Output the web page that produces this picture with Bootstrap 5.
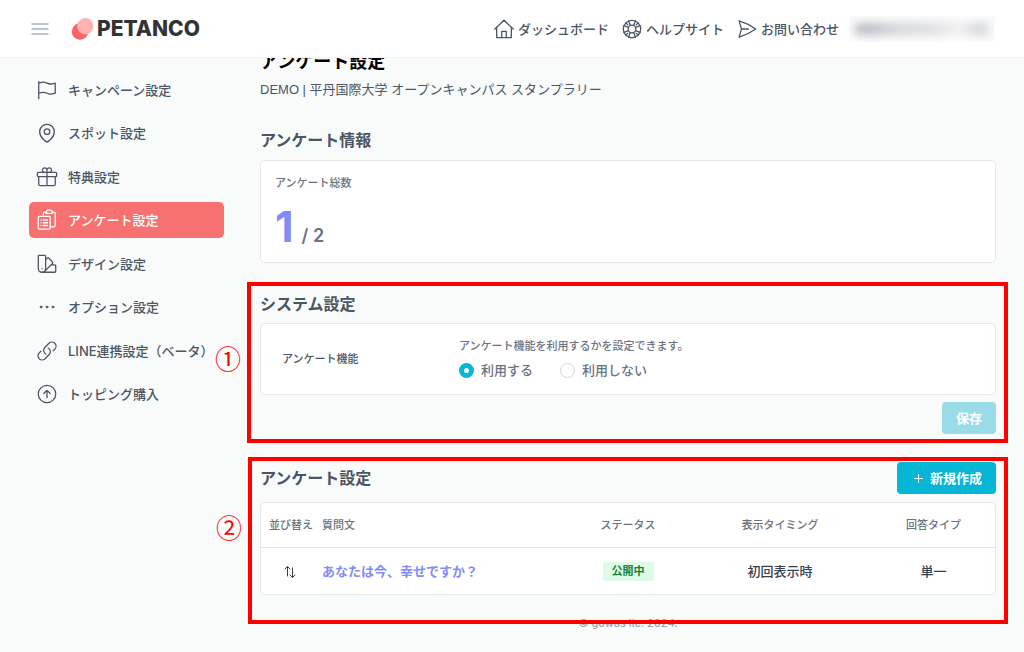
<!DOCTYPE html>
<html lang="ja">
<head>
<meta charset="utf-8">
<meta name="viewport" content="width=device-width, initial-scale=1">
<title>アンケート設定 | PETANCO</title>
<link href="https://cdn.jsdelivr.net/npm/bootstrap@5.3.0/dist/css/bootstrap.min.css" rel="stylesheet">
<style>
  :root { --ink: #4b5563; --muted-ink: #6b7280; --line: #e5e7eb; --cyan: #06b6d4; --note: #ff0000; }
  body { font-family: "Inter", "Noto Sans CJK JP", sans-serif; font-size: 13px; line-height: 20px; font-weight: 500; color: var(--ink); background: #f9fbfb; }
  svg { fill: none; stroke: currentColor; stroke-linecap: round; stroke-linejoin: round; flex: none; }
  .ico { width: 22px; height: 22px; stroke-width: 1.4; }
  .topbar { height: 58px; padding: 0 29px; background: #fff; border-bottom: 1px solid #f0f2f3; }
  .menu-btn { color: #a9b4c4; margin-right: 20px; line-height: 0; }
  .brand { color: #333; font-size: 21px; font-weight: 800; gap: 2px; }
  .topnav { gap: 12px; }
  .topnav a { color: var(--ink); gap: 3px; }
  .account { width: 146px; height: 26px; margin-left: -2px; background: #fcfcfc; overflow: hidden; padding: 7px 6px; }
  .account-name { height: 12px; filter: blur(5px); background: linear-gradient(90deg, #b9bdc4 0 14%, #d0d3d8 30%, #dcdee2 60%, #eff0f2 78%, #d3d6da 90%); }
  .shell { padding: 48px 28px 0 29px; gap: 36px; }
  .sidebar { width: 195px; margin-top: 24px; flex: none; }
  .side-list { height: 340px; }
  .side-list a { height: 36px; padding: 0 7px; gap: 10px; color: var(--ink); border-radius: 5px; }
  .side-list a.active { background: #f87171; color: #fff; }
  .page-title { font-size: 18px; line-height: 28px; font-weight: 700; color: #000; margin-bottom: 4px; }
  .campaign { font-family: "Liberation Sans", "Noto Sans CJK JP", sans-serif; font-weight: 400; }
  .sec-title { font-size: 16px; line-height: 24px; font-weight: 700; color: var(--ink); margin: 0; }
  .panel { background: #fff; border: 1px solid var(--line); border-radius: 5px; }
  .fine { font-size: 11px; line-height: 16px; color: var(--muted-ink); }
  .figures { margin-top: 11px; }
  .count { font-size: 43px; line-height: 48px; font-weight: 700; color: #818cf8; }
  .total { font-size: 18px; font-weight: 600; color: var(--muted-ink); }
  .stats { padding: 14px; height: 103px; margin-top: 8px; }
  .info { padding-top: 28px; margin-bottom: 29px; }
  .noted { position: relative; }
  .frame { position: absolute; border: 4px solid var(--note); pointer-events: none; inset: -10px -12px -9px -13px; }
  .frame-list { inset: -1px -12px -29px -12px; }
  .frame-no { position: absolute; right: 100%; top: 50%; transform: translateY(-50%); margin: -5px 10px 0 0; font: 400 26px/32px "Noto Sans CJK JP", sans-serif; color: var(--note); }
  .frame-list .frame-no { margin-top: -14px; }
  .setting { height: 72px; padding: 0 21px; margin: 7px 0; }
  .setting-name { width: 177px; flex: none; color: var(--ink); }
  .choices { gap: 27px; margin-top: 6px; }
  .choice { gap: 7px; color: var(--muted-ink); }
  .choice .form-check-input { width: 15px; height: 15px; margin: 0; border-color: #d1d5db; }
  .choice .form-check-input:checked { background: #fff; border: 5px solid var(--cyan); }
  .act { height: 32px; border: 0; border-radius: 4px; padding: 0 14px; font-size: 13px; line-height: 20px; font-weight: 700; color: #fff; background: var(--cyan); }
  .act:disabled { background: #9adbe8; color: #fff; opacity: 1; }
  .plus { stroke-width: 1; }
  .questions { table-layout: fixed; text-align: center; color: #374151; }
  .questions th { height: 44px; font-size: 11px; font-weight: 500; color: var(--muted-ink); }
  .questions td { height: 47px; border-top: 1px solid var(--line); }
  .questions th, .questions td { vertical-align: middle; padding: 0 8px; white-space: nowrap; }
  .questions .q { text-align: left; padding-left: 9px; }
  .questions .sort { text-align: right; }
  .questions a { color: #818cf8; font-weight: 700; }
  .c-sort { width: 52px; } .c-status { width: 120px; } .c-time { width: 184px; } .c-type { width: 123px; }
  .state { display: inline-block; padding: 1px 9px; border-radius: 2px; background: #dcfce7; color: #15803d; font-size: 11px; line-height: 17px; font-weight: 600; }
  .foot { font-size: 11px; line-height: 16px; color: #9ca3af; margin-top: 20px; }
</style>
</head>
<body>
<header class="topbar fixed-top d-flex align-items-center">
  <button class="menu-btn btn p-0 border-0" type="button" aria-label="メニュー">
    <svg class="ico" viewBox="0 0 22 22"><path d="M3 6h16M3 11h16M3 16h16"/></svg>
  </button>
  <a class="brand d-flex align-items-center text-decoration-none" href="#">
    <svg width="24" height="24" viewBox="0 0 24 24"><g stroke="none"><circle cx="9" cy="14.500" r="8.200" fill="#f56565"/><circle cx="14.300" cy="9.300" r="8.200" fill="#feb2b2"/></g></svg>
    <span>PETANCO</span>
  </a>
  <nav class="topnav d-flex align-items-center ms-auto">
    <a class="d-flex align-items-center text-decoration-none" href="#">
      <svg class="ico" viewBox="0 0 24 24"><path d="M2 12 12 2.500 22 12M4 10.500V21.500H20V10.500M9.500 21V14.500h5V21"/></svg>ダッシュボード</a>
    <a class="d-flex align-items-center text-decoration-none" href="#">
      <svg class="ico" viewBox="0 0 24 24"><circle cx="12" cy="12" r="9.500"/><circle cx="12" cy="12" r="4.200"/><path d="M8.300 3.200 10.200 8.200M3.200 8.300 8.200 10.200M5.300 5.300 7.300 7.300M15.700 3.200 13.800 8.200M20.800 8.300 15.800 10.200M18.700 5.300 16.700 7.300M8.300 20.800 10.200 15.800M3.200 15.700 8.200 13.800M5.300 18.700 7.300 16.700M15.700 20.800 13.800 15.800M20.800 15.700 15.800 13.800M18.700 18.700 16.700 16.700"/></svg>ヘルプサイト</a>
    <a class="d-flex align-items-center text-decoration-none" href="#">
      <svg class="ico" viewBox="0 0 24 24"><path d="M6 12 3.300 3.100A60 60 0 0 1 21.500 12 60 60 0 0 1 3.300 20.900ZM6 12h7.500"/></svg>お問い合わせ</a>
    <div class="account"><div class="account-name"></div></div>
  </nav>
</header>

<div class="shell d-flex">
  <aside class="sidebar">
    <nav class="side-list d-flex flex-column justify-content-between">
      <a class="d-flex align-items-center text-decoration-none" href="#"><svg class="ico" viewBox="0 0 24 24"><path d="M3 3v18.500M3 4.500l2.800-.7a9 9 0 0 1 6.200.7 9 9 0 0 0 6 .7l3-.7V15.500l-3 .7a9 9 0 0 1-6-.7 9 9 0 0 0-6.200-.7L3 15.500"/></svg>キャンペーン設定</a>
      <a class="d-flex align-items-center text-decoration-none" href="#"><svg class="ico" viewBox="0 0 24 24"><circle cx="12" cy="10.500" r="3"/><path d="M20 10.500C20 17.500 12 22 12 22S4 17.500 4 10.500a8 8 0 0 1 16 0Z"/></svg>スポット設定</a>
      <a class="d-flex align-items-center text-decoration-none" href="#"><svg class="ico" viewBox="0 0 24 24"><rect x="1.500" y="7" width="21" height="4.500" rx="1"/><path d="M3 11.500V20a1.500 1.500 0 0 0 1.500 1.500h15A1.500 1.500 0 0 0 21 20v-8.500M12 7v14.500M12 7V4.700A2.500 2.500 0 1 0 9.500 7M12 7V4.700A2.500 2.500 0 1 1 14.500 7"/></svg>特典設定</a>
      <a class="active d-flex align-items-center text-decoration-none" href="#" aria-current="page"><svg class="ico" viewBox="0 0 24 24"><rect x="2.500" y="8" width="13" height="14" rx="1"/><path d="M5.500 12h.1M8 12h4.500M5.500 15h.1M8 15h4.500M5.500 18h.1M8 18h4.500M8 8V5a1.500 1.500 0 0 1 1.500-1.500H11M15.500 19.500H19a2 2 0 0 0 2-2V5a1.500 1.500 0 0 0-1.500-1.500H18M11 4.800c0-5 7-5 7 0Z"/></svg>アンケート設定</a>
      <a class="d-flex align-items-center text-decoration-none" href="#"><svg class="ico" viewBox="0 0 24 24"><path d="M2.500 3.500a1 1 0 0 1 1-1h6a1 1 0 0 1 1 1V17a4 4 0 0 1-8 0ZM6.500 21H20.500a1 1 0 0 0 1-1V14a1 1 0 0 0-1-1H16.500M10.500 7 12.500 5.500a1 1 0 0 1 1.400 0L18 10a1 1 0 0 1 0 1.400L9.300 20M6.500 17v.1"/></svg>デザイン設定</a>
      <a class="d-flex align-items-center text-decoration-none" href="#"><svg class="ico" viewBox="0 0 24 24"><g fill="currentColor" stroke-width=".6"><circle cx="5.500" cy="12" r="1.200"/><circle cx="12" cy="12" r="1.200"/><circle cx="18.500" cy="12" r="1.200"/></g></svg>オプション設定</a>
      <a class="d-flex align-items-center text-decoration-none" href="#"><svg class="ico" viewBox="0 0 24 24"><path d="M13.200 8.700a4.500 4.500 0 0 1 1.200 7.200l-4.500 4.500a4.500 4.500 0 0 1-6.400-6.400l1.800-1.800m13.400-.5 1.800-1.700a4.500 4.500 0 0 0-6.400-6.400L9.600 8.100a4.500 4.500 0 0 0 1.200 7.200"/></svg>LINE連携設定（ベータ）</a>
      <a class="d-flex align-items-center text-decoration-none" href="#"><svg class="ico" viewBox="0 0 24 24"><circle cx="12" cy="12" r="9.500"/><path d="M12 16V8M8.500 11.500 12 8l3.500 3.500"/></svg>トッピング購入</a>
    </nav>
  </aside>

  <main class="flex-grow-1">
    <h1 class="page-title">アンケート設定</h1>
    <p class="campaign mb-0">DEMO | 平丹国際大学 オープンキャンパス スタンプラリー</p>

    <section class="info">
      <h2 class="sec-title">アンケート情報</h2>
      <div class="panel stats">
        <div class="fine">アンケート総数</div>
        <div class="figures d-flex align-items-baseline gap-2"><span class="count">1</span><span class="total">/ 2</span></div>
      </div>
    </section>

    <section class="noted">
      <h2 class="sec-title">システム設定</h2>
      <div class="panel setting d-flex align-items-center">
        <div class="setting-name fine" id="feature">アンケート機能</div>
        <div role="radiogroup" aria-labelledby="feature">
          <div class="fine">アンケート機能を利用するかを設定できます。</div>
          <div class="choices d-flex">
            <label class="choice d-flex align-items-center"><input class="form-check-input" type="radio" name="use" checked>利用する</label>
            <label class="choice d-flex align-items-center"><input class="form-check-input" type="radio" name="use">利用しない</label>
          </div>
        </div>
      </div>
      <div class="d-flex justify-content-end"><button class="act btn" type="button" disabled>保存</button></div>
      <div class="frame"><span class="frame-no">①</span></div>
    </section>

    <section class="noted mt-4 pt-1">
      <div class="d-flex align-items-center justify-content-between">
        <h2 class="sec-title">アンケート設定</h2>
        <button class="act btn d-flex align-items-center gap-1" type="button"><svg class="plus" width="15" height="15" viewBox="0 0 15 15"><path d="M7.500 3.500v8M3.500 7.500h8"/></svg>新規作成</button>
      </div>
      <div class="panel mt-2">
        <table class="questions w-100">
          <colgroup><col class="c-sort"><col><col class="c-status"><col class="c-time"><col class="c-type"></colgroup>
          <thead><tr><th>並び替え</th><th class="q">質問文</th><th>ステータス</th><th>表示タイミング</th><th>回答タイプ</th></tr></thead>
          <tbody><tr>
            <td class="sort pe-3"><svg width="14" height="14" viewBox="0 0 14 14"><path d="M4.500 11V1.500M2 4l2.500-2.500L7 4M7 10l2.500 2.500L12 10M9.500 3v9.500"/></svg></td>
            <td class="q"><a class="text-decoration-none" href="#">あなたは今、幸せですか？</a></td>
            <td><span class="state">公開中</span></td><td>初回表示時</td><td>単一</td>
          </tr></tbody>
        </table>
      </div>
      <div class="frame frame-list"><span class="frame-no">②</span></div>
    </section>
    <footer class="foot text-center">© gowas llc. 2024.</footer>
  </main>
</div>
<script src="https://cdn.jsdelivr.net/npm/bootstrap@5.3.0/dist/js/bootstrap.bundle.min.js"></script>
</body>
</html>
